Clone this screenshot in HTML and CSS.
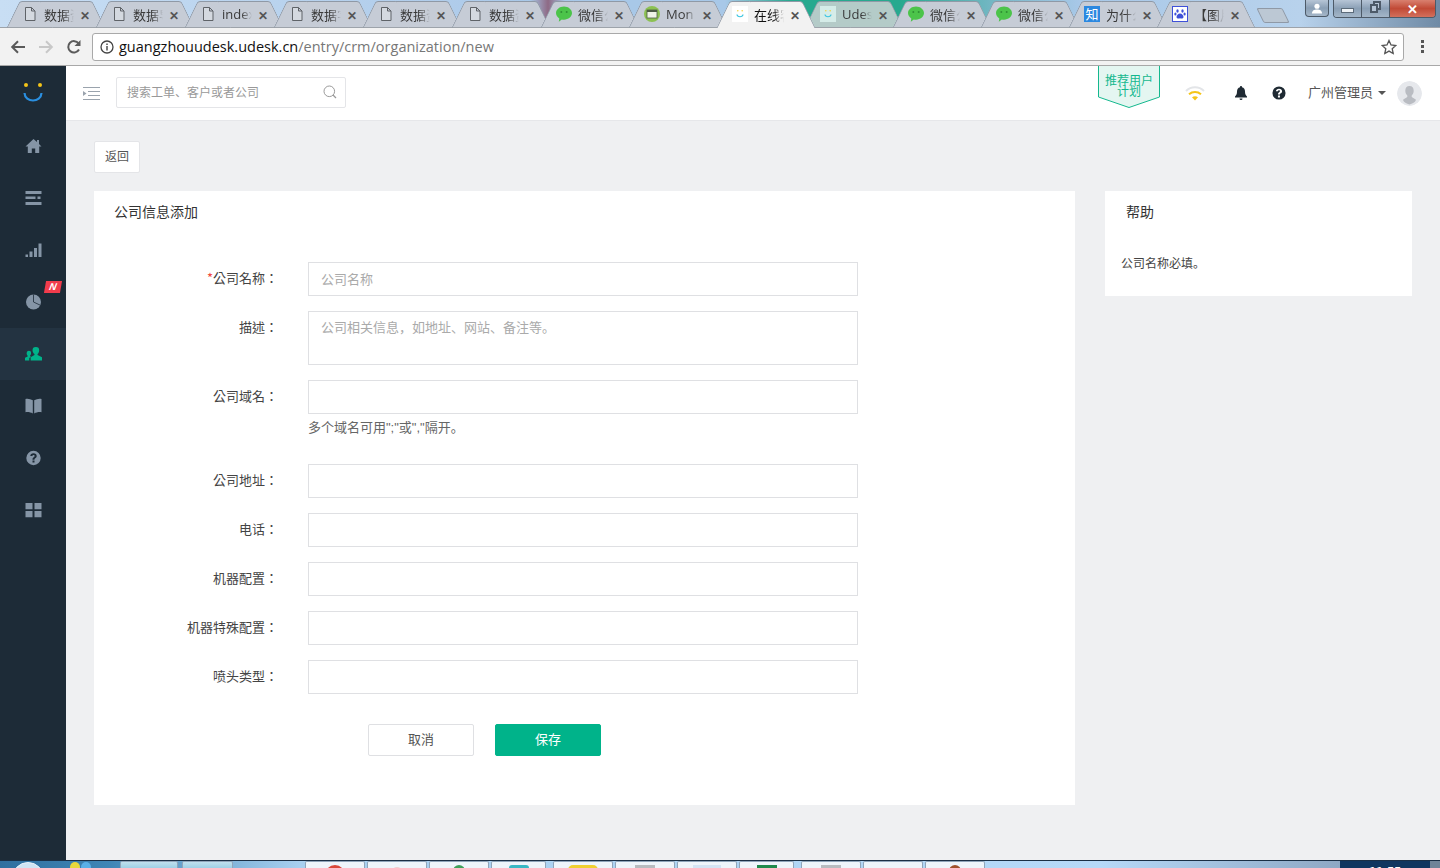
FILE: index.html
```html
<!DOCTYPE html>
<html lang="en">
<head>
  <meta charset="UTF-8">
  <title>公司信息添加</title>
  <link rel="stylesheet" href="styles.css">
</head>
<body>
  <svg class="defs" width="0" height="0">
    <symbol id="i-file" viewBox="0 0 16 16">
      <path d="M3.500 1.500h6l3.500 3.500v9.500h-9.500z M9.500 1.500v3.500h3.500" fill="#fff" fill-opacity=".25" stroke="#5f6368" stroke-width="1"/>
    </symbol>
    <symbol id="i-wechat" viewBox="0 0 16 16">
      <path d="M8 0.500c4.300 0 8 2.900 8 6.600s-3.700 6.600-8 6.600c-.8 0-1.500-.1-2.200-.3L2.800 15.700l.5-3.200C1.200 11.300 0 9.300 0 7.100 0 3.400 3.700.5 8 .5z" fill="#4cc44a"/>
      <circle cx="5.300" cy="6" r="1" fill="#2f8f33"/>
      <circle cx="10.700" cy="6" r="1" fill="#2f8f33"/>
    </symbol>
    <symbol id="i-smile" viewBox="0 0 16 16">
      <circle cx="5.800" cy="4.800" r=".8" fill="#f4d23c"/>
      <circle cx="10.200" cy="4.800" r=".8" fill="#f4d23c"/>
      <path d="M5 8.500c.3 3 5.700 3 6 0" fill="none" stroke="#3fc6e0" stroke-width="1.200"/>
    </symbol>
  </svg>

  <div class="tabstrip">
    <div class="tab"><svg class="favicon"><use href="#i-file"/></svg><span class="tab-title">数据资</span><span class="tab-close">✕</span></div>
    <div class="tab"><svg class="favicon"><use href="#i-file"/></svg><span class="tab-title">数据导</span><span class="tab-close">✕</span></div>
    <div class="tab"><svg class="favicon"><use href="#i-file"/></svg><span class="tab-title tab-latin">index</span><span class="tab-close">✕</span></div>
    <div class="tab"><svg class="favicon"><use href="#i-file"/></svg><span class="tab-title">数据字</span><span class="tab-close">✕</span></div>
    <div class="tab"><svg class="favicon"><use href="#i-file"/></svg><span class="tab-title">数据资</span><span class="tab-close">✕</span></div>
    <div class="tab"><svg class="favicon"><use href="#i-file"/></svg><span class="tab-title">数据资</span><span class="tab-close">✕</span></div>
    <div class="tab"><svg class="favicon"><use href="#i-wechat"/></svg><span class="tab-title">微信公</span><span class="tab-close">✕</span></div>
    <div class="tab">
      <svg class="favicon" viewBox="0 0 16 16"><circle cx="8" cy="8" r="8" fill="#8cc152"/><rect x="3" y="4" width="10" height="8" fill="#eef3e6" stroke="#4c5a45" stroke-width=".8"/><rect x="3" y="4" width="10" height="2" fill="#4c5a45"/></svg>
      <span class="tab-title tab-latin">Mon</span><span class="tab-close">✕</span>
    </div>
    <div class="tab tab-active"><span class="favicon-box"><svg class="favicon"><use href="#i-smile"/></svg></span><span class="tab-title">在线客</span><span class="tab-close">✕</span></div>
    <div class="tab tab-teal"><span class="favicon-box favicon-box-teal"><svg class="favicon"><use href="#i-smile"/></svg></span><span class="tab-title tab-latin">Udes</span><span class="tab-close">✕</span></div>
    <div class="tab"><svg class="favicon"><use href="#i-wechat"/></svg><span class="tab-title">微信公</span><span class="tab-close">✕</span></div>
    <div class="tab"><svg class="favicon"><use href="#i-wechat"/></svg><span class="tab-title">微信公</span><span class="tab-close">✕</span></div>
    <div class="tab"><span class="zhihu">知</span><span class="tab-title">为什么</span><span class="tab-close">✕</span></div>
    <div class="tab">
      <svg class="favicon" viewBox="0 0 16 16"><rect x=".5" y=".5" width="15" height="15" fill="#fff" stroke="#3f51d8"/><g fill="#3f51d8"><ellipse cx="5.500" cy="5" rx="1.200" ry="1.700"/><ellipse cx="10.500" cy="5" rx="1.200" ry="1.700"/><ellipse cx="3.400" cy="8" rx="1.100" ry="1.500"/><ellipse cx="12.600" cy="8" rx="1.100" ry="1.500"/><path d="M8 7.500c-2 0-3.500 2-3.500 3.500S6.500 12.800 8 12.300c1.500.5 3.500.2 3.500-1.300S10 7.500 8 7.500z"/></g></svg>
      <span class="tab-title">【图片</span><span class="tab-close">✕</span>
    </div>
    <div class="tab-new"></div>
    <div class="window-controls">
      <div class="win-btn win-user"><svg width="12" height="11" viewBox="0 0 12 12"><circle cx="6" cy="3.500" r="2.800" fill="#fff"/><path d="M0.500 11.500c0-3.500 2.500-4.500 5.500-4.500s5.500 1 5.500 4.500z" fill="#fff"/></svg></div>
      <div class="win-group">
        <div class="win-btn win-min"><span class="min-bar"></span></div>
        <div class="win-btn win-max"><span class="max-back"></span><span class="max-front"></span></div>
        <div class="win-btn win-close">✕</div>
      </div>
    </div>
  </div>

  <div class="toolbar">
    <button class="tool-btn">
      <svg width="16" height="16" viewBox="0 0 16 16"><path d="M15 8H2.500M8 2.200L2.200 8 8 13.800" fill="none" stroke="#5a5a5a" stroke-width="2"/></svg>
    </button>
    <button class="tool-btn">
      <svg width="16" height="16" viewBox="0 0 16 16"><path d="M1 8h12.500M8 2.200L13.800 8 8 13.800" fill="none" stroke="#c8c8c8" stroke-width="2"/></svg>
    </button>
    <button class="tool-btn">
      <svg width="16" height="16" viewBox="0 0 16 16"><path d="M13 10.500A5.700 5.700 0 1 1 12.600 4.500" fill="none" stroke="#5a5a5a" stroke-width="2"/><path d="M14.500 1v6h-6z" fill="#5a5a5a"/></svg>
    </button>
    <div class="omnibox">
      <svg class="omni-info" width="14" height="14" viewBox="0 0 14 14"><circle cx="7" cy="7" r="6" fill="none" stroke="#444" stroke-width="1.300"/><rect x="6.300" y="6" width="1.400" height="4.500" fill="#444"/><rect x="6.300" y="3.500" width="1.400" height="1.500" fill="#444"/></svg>
      <span class="url-host">guangzhouudesk.udesk.cn</span><span class="url-path">/entry/crm/organization/new</span>
      <svg class="omni-star" width="16" height="16" viewBox="0 0 16 16"><path d="M8 1.500l2 4.500 4.800.5-3.600 3.200 1 4.800L8 12.100l-4.200 2.400 1-4.800L1.200 6.500 6 6z" fill="none" stroke="#555" stroke-width="1.300"/></svg>
    </div>
    <div class="tool-menu"><i></i><i></i><i></i></div>
  </div>

  <div class="app">
    <nav class="sidebar">
      <div class="logo">
        <svg width="24" height="24" viewBox="0 0 24 24"><circle cx="5" cy="4" r="2" fill="#f5c518"/><circle cx="19" cy="4" r="2" fill="#f5c518"/><path d="M3.500 12c.5 10 16.500 10 17 0" fill="none" stroke="#2a8fe0" stroke-width="2.200"/></svg>
      </div>
      <a class="nav-item"><svg viewBox="0 0 16 16"><path d="M8 1L0 8.500h2.300V15h4V10.500h3.400V15h4V8.500H16L13.500 6V2h-2v2.100z"/></svg></a>
      <a class="nav-item"><svg viewBox="0 0 16 16"><path d="M0 1h16v3H0zM0 6.500h10V9H0zM12 6.500h3V9h-3zM0 12h16v3H0z"/></svg></a>
      <a class="nav-item"><svg viewBox="0 0 16 16"><path d="M0 12.500h2.500V15H0zM4 9.500h3V15H4zM8.500 6h3v9h-3zM13 1.500h3V15h-3z"/></svg></a>
      <a class="nav-item">
        <svg viewBox="0 0 16 16"><circle cx="8" cy="8" r="7.500"/><path d="M8 .5V8l7 3.300" fill="none" stroke="#1d2b37" stroke-width=".8"/></svg>
        <span class="badge-new">N</span>
      </a>
      <a class="nav-item nav-item-active"><svg viewBox="0 0 18 16"><path d="M11.500 .5a3.500 3.500 0 0 1 3.500 3.700c0 1.600-.8 3.100-1.700 3.900v1l4.700 2.400V15H6v-3.500l4-2.400v-1C9 7.300 8 5.800 8 4.200A3.500 3.500 0 0 1 11.500 .5zM4 4.500a2.400 2.400 0 0 1 2.400 2.600c0 1-.5 2-1.100 2.700v.7L6.500 11 4.500 12.300V15H0v-3l2.800-1.400V9.800C2.200 9.100 1.700 8.100 1.700 7.100A2.400 2.400 0 0 1 4 4.500z"/></svg></a>
      <a class="nav-item"><svg viewBox="0 0 16 16"><path d="M0 1c2.500-.5 5 0 7.300 1.300V15.500C5 14.200 2.500 13.700 0 14.200zM16 1c-2.500-.5-5 0-7.300 1.300V15.500c2.300-1.300 4.800-1.800 7.300-1.300z"/></svg></a>
      <a class="nav-item"><svg viewBox="0 0 16 16"><path fill-rule="evenodd" d="M8 .8a7.200 7.200 0 1 1 0 14.400A7.200 7.200 0 0 1 8 .8zM7 10.500v2h2v-2zM8 3.300c-1.900 0-3.100 1-3.200 2.800h2c.1-.7.500-1.100 1.200-1.100s1.100.4 1.100 1c0 .5-.3.800-.9 1.200-.9.600-1.200 1.100-1.200 2.300v.2h2v-.2c0-.6.200-.9.800-1.300 1-.6 1.400-1.300 1.400-2.300 0-1.600-1.300-2.600-3.200-2.600z"/></svg></a>
      <a class="nav-item"><svg viewBox="0 0 16 16"><path d="M0 1h7v6.300H0zM9 1h7v6.300H9zM0 9h7v6.300H0zM9 9h7v6.300H9z"/></svg></a>
    </nav>

    <div class="main">
      <header class="topbar">
        <svg class="collapse-icon" width="17" height="13" viewBox="0 0 17 13"><path d="M0 .5h17M5 4.500h12M5 8.500h12M0 12.500h17" stroke="#9aa3ad" stroke-width="1"/><path d="M0 4l3.500 2.500L0 9z" fill="#9aa3ad"/></svg>
        <div class="search">
          <span class="search-text">搜索工单、客户或者公司</span>
          <svg width="14" height="14" viewBox="0 0 14 14"><circle cx="6.300" cy="6.300" r="5.300" fill="none" stroke="#9a9a9a" stroke-width="1"/><path d="M10 10l3 3" stroke="#9a9a9a" stroke-width="1.200"/></svg>
        </div>
        <div class="topbar-right">
          <div class="referral">
            <svg class="referral-shape" width="62" height="42" viewBox="0 0 62 42"><path d="M.5 0v31L31 41.500 61.500 31V0" fill="#e4f6f1" stroke="#14b88e"/></svg>
            <span class="referral-text">推荐用户<br>计划</span>
          </div>
          <svg class="wifi" width="20" height="16" viewBox="0 0 20 16"><path d="M1 6c5-5 13-5 18 0" fill="none" stroke="#e3e5e8" stroke-width="2"/><path d="M4 9.300c3.500-3 8.500-3 12 0" fill="none" stroke="#f5c518" stroke-width="2"/><path d="M7 12.300c1.800-1.300 4.200-1.300 6 0L10 15.500z" fill="#f5c518"/></svg>
          <svg class="bell" width="14" height="14" viewBox="0 0 14 14"><path d="M7 0a1 1 0 0 1 1 1.200c2 .5 3 2 3 4.300 0 2.500.7 3.800 2 5v1H1v-1c1.300-1.200 2-2.500 2-5 0-2.300 1-3.800 3-4.300A1 1 0 0 1 7 0zM5.500 12.500h3a1.500 1.500 0 0 1-3 0z" fill="#1f2a33"/></svg>
          <svg class="help" width="14" height="14" viewBox="0 0 16 16"><path fill-rule="evenodd" d="M8 .5a7.500 7.500 0 1 1 0 15A7.500 7.500 0 0 1 8 .5zM6.800 10.800v2.200h2.300v-2.200zM8 3C5.900 3 4.600 4.100 4.500 6h2.200c.1-.8.500-1.200 1.300-1.200s1.200.4 1.200 1c0 .5-.3.900-1 1.300C7.200 7.800 6.800 8.400 6.800 9.800h2.300c0-.7.200-1 .9-1.400 1-.7 1.500-1.400 1.500-2.500C11.500 4.100 10.100 3 8 3z" fill="#1f2a33"/></svg>
          <span class="username">广州管理员</span>
          <span class="caret"></span>
          <div class="avatar">
            <svg width="25" height="25" viewBox="0 0 25 25"><circle cx="12.500" cy="12.500" r="12.500" fill="#e6e8ec"/><path d="M12.500 5c2.800 0 4.200 2 4.200 4.800 0 2-.8 3.800-2 4.700v1.500l4 2.500c.5.400 0 3-6.200 5-6.200-2-6.700-4.600-6.200-5l4-2.500v-1.500c-1.200-.9-2-2.700-2-4.700C8.300 7 9.700 5 12.500 5z" fill="#b9bcc2"/></svg>
          </div>
        </div>
      </header>

      <div class="content">
        <button class="back-btn">返回</button>
        <div class="columns">
          <section class="card form-card">
            <h3 class="card-title">公司信息添加</h3>
            <form class="form">
              <div class="row">
                <label class="row-label"><span class="required">*</span>公司名称：</label>
                <input class="field" type="text" placeholder="公司名称">
              </div>
              <div class="row">
                <label class="row-label">描述：</label>
                <textarea class="field field-area" placeholder="公司相关信息，如地址、网站、备注等。"></textarea>
              </div>
              <div class="row row-hinted">
                <label class="row-label">公司域名：</label>
                <div class="field-wrap">
                  <input class="field" type="text">
                  <p class="hint">多个域名可用";"或","隔开。</p>
                </div>
              </div>
              <div class="row">
                <label class="row-label">公司地址：</label>
                <input class="field" type="text">
              </div>
              <div class="row">
                <label class="row-label">电话：</label>
                <input class="field" type="text">
              </div>
              <div class="row">
                <label class="row-label">机器配置：</label>
                <input class="field" type="text">
              </div>
              <div class="row">
                <label class="row-label">机器特殊配置：</label>
                <input class="field" type="text">
              </div>
              <div class="row">
                <label class="row-label">喷头类型：</label>
                <input class="field" type="text">
              </div>
              <div class="actions">
                <button type="button" class="btn btn-cancel">取消</button>
                <button type="button" class="btn btn-save">保存</button>
              </div>
            </form>
          </section>
          <aside class="card help-card">
            <h3 class="help-title">帮助</h3>
            <p class="help-text">公司名称必填。</p>
          </aside>
        </div>
      </div>
    </div>
  </div>

  <div class="taskbar">
    <div class="start-orb"></div>
    <div class="quick-dots"><i></i><i></i></div>
    <div class="task task-glass task-w58"></div>
    <div class="task task-glass task-w51"></div>
    <div class="task-blank"></div>
    <div class="task"><i class="dot dot-red"></i></div>
    <div class="task"><i class="dot dot-pink"></i></div>
    <div class="task"><i class="dot dot-green"></i></div>
    <div class="task task-w55"><i class="dot dot-teal"></i></div>
    <div class="task"><i class="dot dot-yellow"></i></div>
    <div class="task"><i class="dot dot-grey"></i></div>
    <div class="task"><i class="dot dot-blue"></i></div>
    <div class="task task-w55"><i class="dot dot-darkgreen"></i></div>
    <div class="task"><i class="dot dot-grey"></i></div>
    <div class="task"></div>
    <div class="task"><i class="dot dot-brown"></i></div>
    <div class="tray"><span class="clock">11:55</span></div>
  </div>
</body>
</html>
```

FILE: styles.css
```css
* {
  box-sizing: border-box;
}

html, body {
  height: 100%;
}

body {
  margin: 0;
  height: 868px;
  overflow: hidden;
  display: flex;
  flex-direction: column;
  font-family: "Noto Sans CJK SC", "Noto Sans", sans-serif;
  font-size: 13px;
  color: #444;
  background: #eff0f2;
}

.defs {
  position: absolute;
}

/* browser tabs */
.tabstrip {
  position: relative;
  height: 28px;
  flex: none;
  display: flex;
  padding-left: 6px;
  overflow: hidden;
  box-shadow: inset 0 -1px 0 #9da3aa;
  background: linear-gradient(90deg, #c8def4 0, #aecbea 480px, #a8c8e8 530px, #8e6a85 548px, #a8c8e8 565px, #a8c8e8 725px, #27a98f 790px, #27a98f 900px, #7ab8c8 1000px, #a8c8e8 1080px, #b8d2ec 1300px, #6f8aa5 1440px);
}

.tab {
  position: relative;
  isolation: isolate;
  flex: none;
  width: 100px;
  height: 28px;
  margin-right: -12px;
  display: flex;
  align-items: center;
  padding-left: 16px;
  font-size: 13px;
  color: #3a3a3a;
  --tab-bg: #c6ccd6;
}

.tab:nth-child(-n+6) {
  margin-right: -11px;
}

.tab::before,
.tab::after {
  content: "";
  position: absolute;
  top: 1px;
  bottom: 0;
  width: 52px;
  background: var(--tab-bg);
  border-top: 1px solid #8f99a6;
  border-bottom: 1px solid #9da3aa;
  z-index: -1;
}

.tab::before {
  left: 7px;
  border-left: 1px solid #8f99a6;
  border-top-left-radius: 3px;
  transform: skewX(-26deg);
}

.tab::after {
  right: 7px;
  border-right: 1px solid #8f99a6;
  border-top-right-radius: 3px;
  transform: skewX(26deg);
}

.tab-teal {
  --tab-bg: #b4cbc8;
}

.tab-active {
  --tab-bg: #f2f2f2;
  z-index: 2;
  color: #111;
}

.tab-active::before,
.tab-active::after {
  border-bottom: 0;
}

.favicon {
  width: 16px;
  height: 16px;
  flex: none;
}

.favicon-box {
  width: 16px;
  height: 16px;
  flex: none;
  background: #fff;
}

.favicon-box-teal {
  background: #d5ece8;
}

.zhihu {
  width: 16px;
  height: 16px;
  flex: none;
  background: #2b88e0;
  color: #fff;
  font-size: 13px;
  line-height: 16px;
  text-align: center;
}

.tab-title {
  width: 30px;
  margin-left: 6px;
  white-space: nowrap;
  overflow: hidden;
  -webkit-mask-image: linear-gradient(90deg, #000 65%, transparent);
  mask-image: linear-gradient(90deg, #000 65%, transparent);
}

.tab-latin {
  font-family: "Open Sans", sans-serif;
}

.tab-close {
  margin-left: 5px;
  width: 12px;
  font-size: 12px;
  font-weight: 700;
  text-align: center;
  color: #555;
}

.tab-new {
  flex: none;
  width: 26px;
  height: 15px;
  margin: 8px 0 0 16px;
  background: #bcc8d4;
  border: 1px solid #8f99a6;
  border-radius: 2px;
  transform: skewX(26deg);
}

.window-controls {
  position: absolute;
  top: 0;
  right: 4px;
  display: flex;
  gap: 4px;
}

.win-group {
  display: flex;
  border: 1px solid #4d5a68;
  border-top: 0;
  border-radius: 0 0 4px 4px;
  overflow: hidden;
}

.win-btn {
  height: 17px;
  display: flex;
  align-items: center;
  justify-content: center;
  background: linear-gradient(#b6c5d6, #8a9fb5 50%, #a4b6c8);
}

.win-user {
  width: 24px;
  border: 1px solid #4d5a68;
  border-top: 0;
  border-radius: 0 0 4px 4px;
}

.win-min {
  width: 28px;
  border-right: 1px solid #4d5a68;
}

.min-bar {
  width: 13px;
  height: 5px;
  margin-top: 3px;
  background: #eef2f6;
  border: 1px solid #5c6b7a;
}

.win-max {
  position: relative;
  width: 28px;
  border-right: 1px solid #4d5a68;
}

.max-back,
.max-front {
  position: absolute;
  width: 8px;
  height: 9px;
  border: 2px solid #4d5a68;
  background: #b6c5d6;
}

.max-back {
  top: 1px;
  left: 11px;
}

.max-front {
  top: 4px;
  left: 8px;
}

.win-close {
  width: 45px;
  background: linear-gradient(#d9806f, #c14a36 50%, #d3705c);
  color: #fff;
  font-size: 13px;
  font-weight: 700;
}

/* toolbar */
.toolbar {
  height: 38px;
  flex: none;
  display: flex;
  align-items: center;
  padding: 0 0 0 4px;
  background: #f2f2f2;
  border-bottom: 1px solid #a8a8a8;
}

.tool-btn {
  width: 28px;
  height: 28px;
  padding: 0;
  border: 0;
  background: none;
  display: flex;
  align-items: center;
  justify-content: center;
}

.omnibox {
  width: 1312px;
  height: 28px;
  margin-left: 4px;
  display: flex;
  align-items: center;
  padding: 0 6px 1px 7px;
  background: #fff;
  border: 1px solid #a9a9a9;
  border-radius: 3px;
  font-family: "Open Sans", sans-serif;
  font-size: 14.5px;
  white-space: nowrap;
}

.omni-info {
  margin: 1px 5px 0 0;
}

.url-host {
  color: #111;
}

.url-path {
  color: #777;
}

.omni-star {
  margin: 1px 0 0 auto;
}

.tool-menu {
  width: 36px;
  display: flex;
  flex-direction: column;
  align-items: center;
  gap: 2px;
}

.tool-menu i {
  width: 3px;
  height: 3px;
  background: #555;
}

/* app shell */
.app {
  flex: 1;
  min-height: 0;
  display: flex;
}

.sidebar {
  width: 66px;
  flex: none;
  background: #1d2b37;
}

.logo {
  height: 54px;
  display: flex;
  align-items: center;
  justify-content: center;
}

.nav-item {
  position: relative;
  height: 52px;
  display: flex;
  align-items: center;
  justify-content: center;
}

.nav-item svg {
  height: 16px;
  width: 17px;
  fill: #8595a6;
}

.nav-item-active {
  background: #233341;
}

.nav-item-active svg {
  fill: #00b38a;
}

.badge-new {
  position: absolute;
  top: 5px;
  left: 45px;
  width: 16px;
  height: 12px;
  background: #f23c4c;
  color: #fff;
  font: italic 700 10px/12px "Liberation Sans", sans-serif;
  text-align: center;
  transform: skewX(-10deg);
}

.main {
  flex: 1;
  min-width: 0;
  display: flex;
  flex-direction: column;
}

.topbar {
  height: 55px;
  flex: none;
  display: flex;
  align-items: center;
  padding: 0 18px 0 17px;
  background: #fff;
  border-bottom: 1px solid #e6e7ea;
}

.collapse-icon {
  margin-right: 16px;
}

.search {
  width: 230px;
  height: 31px;
  margin-bottom: 2px;
  display: flex;
  align-items: center;
  justify-content: space-between;
  padding: 0 8px 0 10px;
  border: 1px solid #e4e5e8;
  border-radius: 2px;
}

.search-text {
  font-size: 12px;
  line-height: 16px;
  margin-top: -1px;
  color: #999;
}

.topbar-right {
  margin-left: auto;
  align-self: stretch;
  display: flex;
  align-items: center;
}

.referral {
  position: relative;
  align-self: flex-start;
  width: 62px;
  height: 42px;
  padding-top: 8px;
  text-align: center;
  font-size: 12px;
  line-height: 11px;
  color: #14b88e;
}

.referral-shape {
  position: absolute;
  top: 0;
  left: 0;
}

.referral-text {
  position: relative;
}

.wifi {
  margin-left: 25px;
}

.bell {
  margin-left: 29px;
}

.help {
  margin-left: 24px;
}

.username {
  margin: 0 0 3px 22px;
  font-size: 13px;
  color: #555;
}

.caret {
  margin-left: 5px;
  border: 4px solid transparent;
  border-top-color: #555;
  border-bottom: 0;
}

.avatar {
  margin-left: 11px;
  height: 25px;
  border-radius: 50%;
  overflow: hidden;
}

/* page content */
.content {
  flex: 1;
  padding: 20px 28px 0;
}

.back-btn {
  display: block;
  width: 46px;
  height: 32px;
  padding: 0 0 4px;
  background: #fff;
  border: 1px solid #e4e5e8;
  border-radius: 2px;
  font-family: inherit;
  font-size: 12px;
  color: #555;
}

.columns {
  display: flex;
  align-items: flex-start;
  gap: 30px;
  margin-top: 18px;
}

.card {
  background: #fff;
}

.form-card {
  width: 981px;
  height: 614px;
  padding: 10px 20px 0;
}

.card-title {
  margin: 0;
  font-size: 14px;
  font-weight: 400;
  line-height: 20px;
  color: #333;
}

.form {
  margin: 41px 0 0 -20px;
}

.row {
  display: flex;
  margin-bottom: 15px;
}

.row-hinted {
  margin-bottom: 26px;
}

/* TC forms centre the colon the way the page does */
.row-label {
  width: 184px;
  margin-right: 30px;
  flex: none;
  text-align: right;
  font-family: "Noto Sans CJK TC", sans-serif;
  line-height: 32px;
  color: #444;
}

.required {
  color: #f0483e;
}

.field-wrap {
  width: 550px;
}

.field {
  display: block;
  width: 550px;
  height: 34px;
  padding: 0 12px 2px;
  border: 1px solid #dfe0e3;
  outline: 0;
  background: #fff;
  font-family: inherit;
  font-size: 13px;
  color: #444;
}

.field::placeholder {
  color: #aaa;
}

.field-area {
  height: 54px;
  padding: 5px 12px;
  line-height: 20px;
  resize: none;
}

.hint {
  margin: 4px 0 0;
  font-family: "Liberation Sans", "Noto Sans CJK SC", sans-serif;
  font-size: 13px;
  line-height: 20px;
  color: #666;
}

.actions {
  display: flex;
  gap: 21px;
  margin: 30px 0 0 274px;
}

.btn {
  width: 106px;
  height: 32px;
  padding: 0 0 4px;
  border-radius: 2px;
  font-family: inherit;
  font-size: 13px;
}

.btn-cancel {
  background: #fff;
  border: 1px solid #dfe0e3;
  color: #555;
}

.btn-save {
  background: #00b38a;
  border: 1px solid #00b38a;
  color: #fff;
}

.help-card {
  width: 307px;
  height: 105px;
  padding: 10px 16px 0;
}

.help-title {
  margin: 0 0 0 5px;
  font-size: 14px;
  font-weight: 400;
  line-height: 20px;
  color: #333;
}

.help-text {
  margin: 32px 0 0;
  font-size: 12px;
  line-height: 20px;
  color: #444;
}

/* windows taskbar */
.taskbar {
  height: 8px;
  flex: none;
  display: flex;
  overflow: hidden;
  border-top: 1px solid #1a2f45;
  background: linear-gradient(90deg, #2f6f9f 0, #3f86b6 110px, #a8d0f0 300px, #b6d9f8 1100px, #8ea8c4 1340px);
}

.start-orb {
  width: 32px;
  height: 32px;
  margin: 1px 0 0 12px;
  flex: none;
  border-radius: 50%;
  background: #cfe4f4;
  border: 1px solid #e8f2fa;
}

.quick-dots {
  display: flex;
  gap: 1px;
  width: 76px;
  padding: 1px 0 0 26px;
}

.quick-dots i {
  width: 10px;
  height: 10px;
  border-radius: 50%;
  background: #e8d83c;
}

.quick-dots i + i {
  background: #5ab0e8;
}

.task {
  position: relative;
  width: 60px;
  flex: none;
  margin-right: 2px;
  background: #eef5fb;
  border: 1px solid #8fa5ba;
  border-bottom: 0;
  border-radius: 2px 2px 0 0;
  display: flex;
  justify-content: center;
}

.task-glass {
  background: linear-gradient(#bfe0ee, #9ed0e6);
  margin-right: 4px;
}

.task-w58 {
  width: 58px;
}

.task-w51 {
  width: 51px;
  margin-right: 7px;
}

.task-w55 {
  width: 55px;
  margin-right: 7px;
}

.task-blank {
  width: 65px;
  flex: none;
}

.dot {
  display: block;
  width: 20px;
  height: 20px;
  margin-top: 3px;
  border-radius: 50%;
}

.dot-red { background: #d9483a; }
.dot-pink { background: #eccfd0; width: 12px; height: 12px; margin-top: 5px; }
.dot-green { background: #3fa05a; width: 12px; height: 12px; }
.dot-teal { background: #38b8c4; border-radius: 3px; }
.dot-yellow { background: #f0d030; border-radius: 5px; width: 30px; }
.dot-grey { background: #b8bcc0; border-radius: 0; }
.dot-blue { background: #d4e4f4; border-radius: 0; width: 28px; }
.dot-darkgreen { background: #1f8a4c; border-radius: 0; }
.dot-brown { background: #a0522d; width: 12px; height: 12px; }

.tray {
  margin-left: auto;
  width: 100px;
  flex: none;
  background: #10365f;
  text-align: center;
  color: #fff;
  font-size: 12px;
  font-weight: 700;
  line-height: 14px;
  border-right: 10px solid #6f8498;
}

.clock {
  display: block;
  margin-top: 3px;
}
```
